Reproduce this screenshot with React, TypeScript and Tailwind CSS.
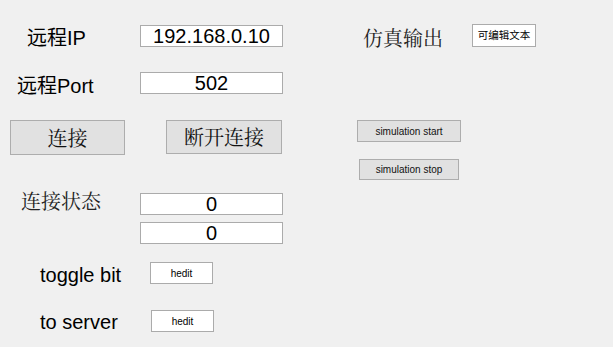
import React from "react"

const sans = "font-['Liberation_Sans','Noto_Sans_CJK_SC',sans-serif]"
const song = "font-['Noto_Serif_CJK_SC','Noto_Sans_CJK_SC',serif]"

function Edit({ value, className }: { value: string; className: string }) {
  return (
    <div
      className={`bg-white border border-[#ababab] flex items-center justify-center text-black ${className}`}
    >
      {value}
    </div>
  )
}

function Btn({ label, className }: { label: string; className: string }) {
  return (
    <div
      className={`bg-[#e1e1e1] border border-[#adadad] flex items-center justify-center text-[#111] ${className}`}
    >
      {label}
    </div>
  )
}

export default function App() {
  return (
    <div className={`w-[613px] h-[347px] bg-[#f0f0f0] flex overflow-hidden text-black ${sans}`}>
      {/* left column */}
      <div className="w-[290px] flex flex-col">
        <div className="mt-[25px] h-[22px] flex items-start">
          <div className="w-[140px] pl-[27px] mt-[2px] h-[22px] text-[20px] leading-[22px]">远程IP</div>
          <Edit value="192.168.0.10" className="w-[143px] h-[22px] text-[20px] leading-[20px]" />
        </div>

        <div className="mt-[25px] h-[22px] flex items-start">
          <div className="w-[140px] pl-[17px] mt-[3px] h-[22px] text-[20px] leading-[22px]">远程Port</div>
          <Edit value="502" className="w-[143px] h-[22px] text-[20px] leading-[20px]" />
        </div>

        <div className="mt-[26px] h-[35px] flex items-start">
          <Btn label="连接" className={`ml-[10px] w-[115px] h-[35px] text-[20px] ${song}`} />
          <Btn label="断开连接" className={`ml-[41px] w-[116px] h-[34px] text-[20px] ${song}`} />
        </div>

        <div className="mt-[38px] h-[51px] flex items-start">
          <div className={`w-[140px] pl-[21px] -mt-[3px] h-[22px] text-[20px] leading-[22px] text-[#222] ${song}`}>
            连接状态
          </div>
          <div className="flex flex-col gap-[7px]">
            <Edit value="0" className="w-[143px] h-[22px] text-[20px] leading-[20px]" />
            <Edit value="0" className="w-[143px] h-[22px] text-[20px] leading-[20px]" />
          </div>
        </div>

        <div className="mt-[18px] h-[22px] flex items-start">
          <div className="w-[150px] pl-[40px] mt-[2px] h-[22px] text-[20px] leading-[22px]">toggle bit</div>
          <Edit value="hedit" className="w-[63px] h-[22px] text-[10px]" />
        </div>

        <div className="mt-[26px] h-[22px] flex items-start">
          <div className="w-[151px] pl-[40px] mt-[1px] h-[22px] text-[20px] leading-[22px]">to server</div>
          <Edit value="hedit" className="w-[63px] h-[22px] text-[10px]" />
        </div>
      </div>

      {/* right column */}
      <div className="flex-1 flex flex-col">
        <div className="mt-[24px] h-[23px] flex items-start">
          <div className={`ml-[73px] w-[109px] mt-[3px] h-[22px] text-[20px] leading-[22px] text-[#222] ${song}`}>
            仿真输出
          </div>
          <Edit value="可编辑文本" className="w-[64px] h-[23px] text-[10.5px]" />
        </div>

        <Btn label="simulation start" className="mt-[73px] ml-[67px] w-[104px] h-[22px] text-[10px]" />
        <Btn label="simulation stop" className="mt-[17px] ml-[69px] w-[100px] h-[21px] text-[10px]" />
      </div>
    </div>
  )
}
